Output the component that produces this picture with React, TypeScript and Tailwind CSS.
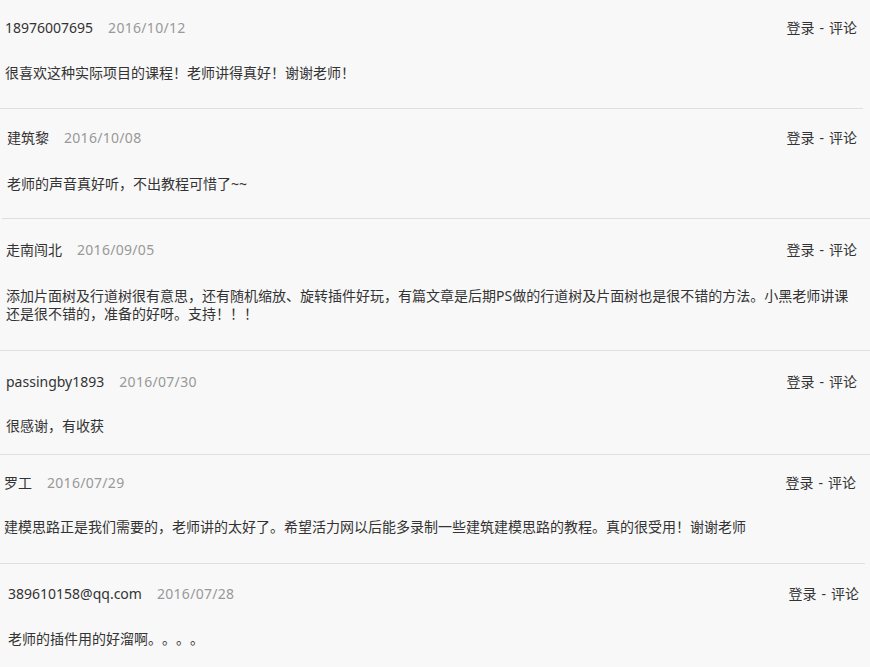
import React from "react";

type Comment = {
  name: string;
  date: string;
  body: string;
  box: string;
  gap: string;
};

const comments: Comment[] = [
  {
    name: "18976007695",
    date: "2016/10/12",
    body: "很喜欢这种实际项目的课程！老师讲得真好！谢谢老师！",
    box: "pt-[15px] pb-[26px] pl-[5px] pr-[6px] mr-[7px]",
    gap: "mt-[25px]",
  },
  {
    name: "建筑黎",
    date: "2016/10/08",
    body: "老师的声音真好听，不出教程可惜了~~",
    box: "pt-[16px] pb-[25px] pl-[5px] pr-[13px] ml-[2px]",
    gap: "mt-[26px]",
  },
  {
    name: "走南闯北",
    date: "2016/09/05",
    body: "添加片面树及行道树很有意思，还有随机缩放、旋转插件好玩，有篇文章是后期PS做的行道树及片面树也是很不错的方法。小黑老师讲课还是很不错的，准备的好呀。支持！！！",
    box: "pt-[18px] pb-[27px] pl-[6px] pr-[13px]",
    gap: "mt-[26px]",
  },
  {
    name: "passingby1893",
    date: "2016/07/30",
    body: "很感谢，有收获",
    box: "pt-[18px] pb-[19px] pl-[6px] pr-[13px]",
    gap: "mt-[24px]",
  },
  {
    name: "罗工",
    date: "2016/07/29",
    body: "建模思路正是我们需要的，老师讲的太好了。希望活力网以后能多录制一些建筑建模思路的教程。真的很受用！谢谢老师",
    box: "pt-[15px] pb-[27px] pl-[4px] pr-[9px] mr-[5px]",
    gap: "mt-[24px]",
  },
  {
    name: "389610158@qq.com",
    date: "2016/07/28",
    body: "老师的插件用的好溜啊。。。。",
    box: "pt-[17px] pb-[27px] pl-[8px] pr-[11px]",
    gap: "mt-[25px]",
  },
];

const CommentRow = ({ comment, last }: { comment: Comment; last: boolean }) => {
  return (
    <div
      className={`${comment.box} ${
        last ? "" : "border-b border-[#dfdfdf]"
      }`}
    >
      <div className="flex h-6 items-center justify-between">
        <div className="flex items-center">
          <span className="text-[#333]">{comment.name}</span>
          <span className="ml-[15px] text-[#999] tracking-[0.3px]">
            {comment.date}
          </span>
        </div>
        <div className="flex items-center text-[#333]">
          <a href="#" className="hover:text-[#f60]">
            登录
          </a>
          <span className="mx-[5px]">-</span>
          <a href="#" className="hover:text-[#f60]">
            评论
          </a>
        </div>
      </div>
      <p className={`${comment.gap} leading-[18px] text-[#333]`}>
        {comment.body}
      </p>
    </div>
  );
};

export default function App() {
  return (
    <div
      className="min-h-screen w-[870px] bg-[#f8f8f8] text-[14px] [text-spacing-trim:space-all]"
      style={{
        fontFamily: '"Noto Sans", "Noto Sans CJK SC", sans-serif',
      }}
    >
      {comments.map((c, i) => (
        <CommentRow key={c.name} comment={c} last={i === comments.length - 1} />
      ))}
    </div>
  );
}
